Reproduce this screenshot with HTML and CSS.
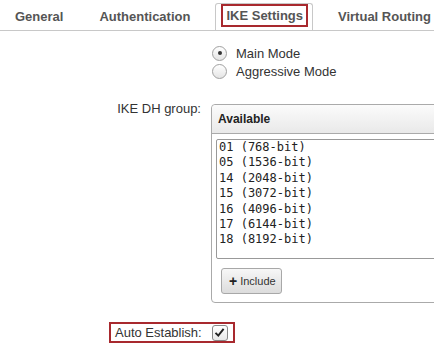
FILE: index.html
```html
<!DOCTYPE html>
<html>
<head>
<meta charset="utf-8">
<link rel="stylesheet" href="styles.css">
</head>
<body>
<div class="tabs">
  <div class="tab">General</div>
  <div class="tab">Authentication</div>
  <div class="tab active"><span class="mark">IKE Settings</span></div>
  <div class="tab">Virtual Routing</div>
</div>
<div class="form">
  <div class="row">
    <div class="label"></div>
    <div class="modes">
      <div class="opt"><span class="radio on"></span>Main Mode</div>
      <div class="opt"><span class="radio"></span>Aggressive Mode</div>
    </div>
  </div>
  <div class="row dh">
    <div class="label dh-label">IKE DH group:</div>
    <div class="panel-clip">
      <div class="panel">
        <div class="panel-head">Available</div>
        <div class="list">
          <div>01 (768-bit)</div>
          <div>05 (1536-bit)</div>
          <div>14 (2048-bit)</div>
          <div>15 (3072-bit)</div>
          <div>16 (4096-bit)</div>
          <div>17 (6144-bit)</div>
          <div>18 (8192-bit)</div>
        </div>
        <div class="btn"><span class="plus">+</span> Include</div>
      </div>
    </div>
  </div>
  <div class="auto">
    <span class="auto-label">Auto Establish:</span>
    <span class="check"><svg width="11" height="11" viewBox="0 0 11 11"><path d="M1.5 5.8 L4.3 8.6 L9.6 1.8" fill="none" stroke="#222" stroke-width="1.9"/></svg></span>
  </div>
</div>
</body>
</html>
```
FILE: styles.css
```css
html, body {
  margin: 0;
  padding: 0;
}
body {
  width: 434px;
  height: 353px;
  overflow: hidden;
  background: #fff;
  font-family: "Liberation Sans", Arial, sans-serif;
  font-size: 13px;
  color: #333;
}
.tabs {
  display: flex;
  align-items: flex-end;
  height: 30px;
  border-bottom: 1px solid #c8c8c8;
  padding-left: 4px;
  white-space: nowrap;
  overflow: hidden;
}
.tab {
  height: 27px;
  line-height: 27px;
  padding: 0 11px;
  margin-right: 14px;
  font-weight: bold;
  color: #555;
  flex-shrink: 0;
}
.tab.active {
  height: 27px;
  padding: 0 4px 0 5px;
  border: 1px solid #c8c8c8;
  border-bottom: none;
  border-radius: 3px 3px 0 0;
  background: #fff;
  margin-bottom: -1px;
}
.mark {
  display: block;
  height: 19px;
  line-height: 20px;
  padding: 0 3px 0 3px;
  border: 2px solid #a8292e;
}
.form {
  padding-top: 13px;
}
.row {
  display: grid;
  grid-template-columns: 201px 1fr;
  column-gap: 10px;
}
.label {
  text-align: right;
}
.modes {
  display: flex;
  flex-direction: column;
}
.opt {
  display: flex;
  align-items: center;
  height: 18px;
  color: #333;
}
.radio {
  width: 15px;
  height: 15px;
  box-sizing: border-box;
  border: 1px solid #a0a0a0;
  border-radius: 50%;
  background: linear-gradient(#ffffff, #e4e4e4);
  margin: 0 9px 0 1px;
  display: flex;
  align-items: center;
  justify-content: center;
}
.radio.on::after {
  content: "";
  width: 4px;
  height: 4px;
  border-radius: 50%;
  background: #333;
}
.dh {
  margin-top: 24px;
}
.dh-label {
  line-height: 16px;
  margin-top: -3px;
  white-space: nowrap;
}
.panel-clip {
  overflow: hidden;
  min-width: 0;
}
.panel {
  width: 250px;
  border: 1px solid #aaa;
  border-radius: 4px;
  padding-bottom: 8px;
}
.panel-head {
  height: 28px;
  line-height: 28px;
  padding-left: 6px;
  border-bottom: 1px solid #aaa;
  border-radius: 4px 4px 0 0;
  background: linear-gradient(#fbfbfb, #e9e9e9);
  font-weight: bold;
  font-size: 12px;
  color: #222;
}
.list {
  margin: 5px 0 0 4px;
  height: 118px;
  border: 1px solid #999;
  border-radius: 2px;
  padding: 0 2px;
  font-family: "DejaVu Sans Mono", monospace;
  font-size: 12px;
  line-height: 15.4px;
  color: #222;
}
.btn {
  display: inline-flex;
  align-items: center;
  box-sizing: border-box;
  margin: 9px 0 0 9px;
  width: 61px;
  height: 26px;
  padding-left: 7px;
  border: 1px solid #a8a8a8;
  border-radius: 3px;
  background: linear-gradient(#f7f7f7, #dcdcdc);
  font-size: 11px;
  color: #333;
}
.plus {
  font-weight: bold;
  font-size: 14px;
  color: #222;
  margin-right: 3px;
}
.auto {
  display: inline-flex;
  align-items: center;
  box-sizing: border-box;
  margin: 19px 0 0 109px;
  width: 126px;
  height: 21px;
  padding-left: 4px;
  border: 2px solid #a8292e;
}
.auto-label {
  font-size: 13px;
  color: #333;
}
.check {
  display: flex;
  align-items: center;
  justify-content: center;
  box-sizing: border-box;
  width: 16px;
  height: 16px;
  margin-left: 10px;
  border: 1px solid #888;
  border-radius: 3px;
  background: linear-gradient(#fff, #e8e8e8);
}
```
